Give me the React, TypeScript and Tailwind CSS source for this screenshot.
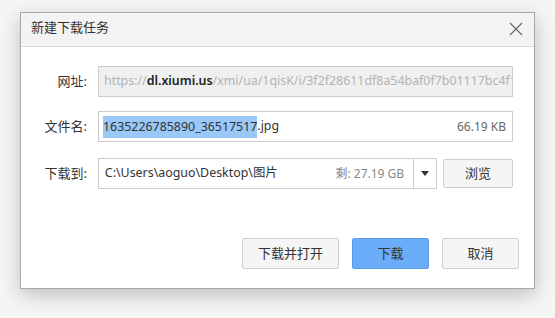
import React from 'react';

const font = { fontFamily: '"Noto Sans", "Noto Sans CJK SC", sans-serif' };

export default function App() {
  return (
    <div className="w-[555px] h-[318px] bg-[#f5f5f5] overflow-hidden pt-[12px] pl-[20px]" style={font}>
      <div className="w-[515px] h-[277px] bg-white border border-[#a8a8a8] shadow-[0_6px_18px_rgba(0,0,0,0.22)] flex flex-col">
        <div className="h-[34px] bg-[#f3f3f3] border-b border-[#dadada] flex items-center justify-between pl-[10px] pr-[10px]">
          <span className="text-[13px] text-[#333] -mt-[3px]">新建下载任务</span>
          <svg width="14" height="14" viewBox="0 0 14 14" className="mr-[1px] -mt-[2px]">
            <path d="M1 1 L13 13 M13 1 L1 13" stroke="#666" strokeWidth="1.2" />
          </svg>
        </div>

        <div className="flex flex-col pt-[19px] pr-[21px] text-[13px] text-[#333]">
          <div className="flex items-center h-[31px]">
            <span className="w-[67px] text-right pr-[1px]">网址:</span>
            <div className="ml-[10px] flex-1 h-[31px] bg-[#f0f0f0] border border-[#cccccc] flex items-center pl-[5px] overflow-hidden whitespace-nowrap text-[12.4px] text-[#b3b3b3]">
              https://<span className="text-[#222] font-semibold">dl.xiumi.us</span>/xmi/ua/1qisK/i/3f2f28611df8a54baf0f7b01117bc4f1-
            </div>
          </div>

          <div className="flex items-center h-[31px] mt-[14px]">
            <span className="w-[67px] text-right pr-[1px]">文件名:</span>
            <div className="ml-[10px] flex-1 h-[31px] bg-white border border-[#cccccc] flex items-center pl-[4px] pr-[6px] whitespace-nowrap text-[12.4px]">
              <span className="bg-[#99c8f9] leading-[22px]">1635226785890_36517517</span>
              <span>.jpg</span>
              <span className="ml-auto text-[#666] text-[12px]">66.19 KB</span>
            </div>
          </div>

          <div className="flex items-center h-[31px] mt-[16px]">
            <span className="w-[67px] text-right pr-[1px]">下载到:</span>
            <div className="ml-[10px] w-[340px] h-[31px] bg-white border border-[#cccccc] flex items-center whitespace-nowrap text-[12.4px]">
              <span className="pl-[6px]">C:\Users\aoguo\Desktop\图片</span>
              <span className="ml-auto pr-[9px] text-[#888] text-[12px]">剩: 27.19 GB</span>
              <div className="w-[23px] h-full border-l border-[#cccccc] flex items-center justify-center">
                <svg width="8" height="5" viewBox="0 0 8 5">
                  <path d="M0 0 H8 L4 5 Z" fill="#333" />
                </svg>
              </div>
            </div>
            <button className="ml-[6px] w-[70px] h-[29px] bg-[#f5f5f5] border border-[#cfcfcf] rounded-[2px] text-[#333]">浏览</button>
          </div>
        </div>

        <div className="mt-auto mb-[19px] flex justify-end gap-[13px] pr-[15px] text-[13px] text-[#333]">
          <button className="w-[97px] h-[31px] bg-[#f5f5f5] border border-[#cfcfcf] rounded-[2px]">下载并打开</button>
          <button className="w-[77px] h-[31px] bg-[#6badf8] border border-[#5b9ce8] rounded-[2px]">下载</button>
          <button className="w-[77px] h-[31px] bg-[#f5f5f5] border border-[#cfcfcf] rounded-[2px]">取消</button>
        </div>
      </div>
    </div>
  );
}
